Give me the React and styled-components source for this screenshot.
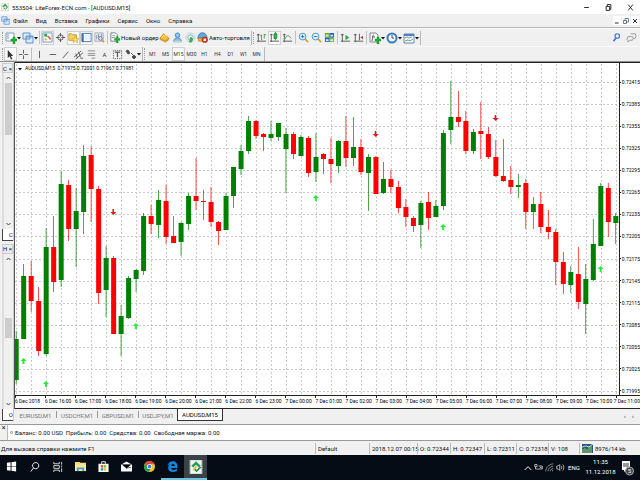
import React from 'react';
import styled, { createGlobalStyle, css } from 'styled-components';

const GlobalStyle = createGlobalStyle`
  * {
    box-sizing: border-box;
  }

  body {
    margin: 0;
    overflow: hidden;
    background: #f0f0f0;
    color: #111;
    font-family: Roboto, 'Liberation Sans', sans-serif;
    font-size: 6px;
    line-height: 9px;
  }

  button {
    margin: 0;
    padding: 0;
    border: 0;
    background: none;
    color: inherit;
    font: inherit;
  }

  svg {
    display: block;
    flex: none;
  }
`;

const Desktop = styled.div`
  display: flex;
  flex-direction: column;
  height: 100vh;
`;

const TitleBar = styled.header`
  display: flex;
  align-items: center;
  gap: 3px;
  height: 14px;
  padding-left: 1px;
  background: #fff;
`;

const Title = styled.h1`
  flex: 1;
  margin: 0;
  font-size: 6px;
  font-weight: 400;
  white-space: nowrap;
`;

const CaptionButton = styled.button`
  display: grid;
  place-items: center;
  width: 19px;
  height: 14px;
`;

const MenuBar = styled.nav`
  display: flex;
  align-items: center;
  height: 14px;
  padding-left: 1px;
  border-bottom: 1px solid #b4b4b4;
`;

const MenuItem = styled.button`
  margin-left: ${props => props.$gap || 8}px;
  white-space: nowrap;
`;

const ChildButton = styled.button`
  display: grid;
  place-items: center;
  width: 8px;
  height: 9px;
  margin-right: 1px;
  background: #fff;
`;

const Spacer = styled.div`
  flex: 1;
`;

const ToolRow = styled.div`
  display: flex;
  align-items: center;
  height: ${props => props.$height}px;
  padding-left: 1px;
  border-top: 1px solid #fafafa;
`;

const ToolGroup = styled.div`
  display: flex;
  align-items: center;
  height: 14px;
  padding: 0 1px;
  border-right: 1px solid #b9b9b9;
`;

const Grip = styled.span`
  width: 2px;
  height: 12px;
  border-left: 1px dotted #999;
`;

const Divider = styled.span`
  width: 1px;
  height: 13px;
  margin: 0 1px;
  background: #c3c3c3;
`;

const pressed = css`
  background: #fafafa;
  box-shadow: inset 0 0 0 1px #cfcfcf;
`;

const ToolButton = styled.button`
  display: flex;
  align-items: center;
  justify-content: center;
  width: ${props => props.$width || 13}px;
  height: 14px;
  color: #333;
  white-space: nowrap;
  ${props => props.$pressed && pressed}
`;

const OrderButton = styled(ToolButton)`
  gap: 1px;
  justify-content: flex-start;
  color: #111;
`;

const Period = styled(ToolButton)`
  font-size: 5px;
`;

const Workspace = styled.main`
  display: flex;
  flex: 1;
  min-height: 0;
  border-top: 1px solid #8c8c8c;
`;

const Docks = styled.aside`
  display: flex;
  flex-direction: column;
  width: 14px;
  gap: 3px;
  padding: 1px 0 3px;
`;

const Dock = styled.section`
  display: flex;
  flex: 1;
  flex-direction: column;
  padding-left: 2px;
  border-right: 1px solid #ccc;
`;

const DockHead = styled.div`
  display: flex;
  align-items: center;
  justify-content: space-between;
  height: 10px;
  border: 1px solid #ccc;
  background: #e8eef6;
`;

const ScrollTrack = styled.div`
  display: flex;
  flex: 1;
  flex-direction: column;
  align-items: center;
  justify-content: space-between;
  padding: 3px 0;
  border-left: 2px solid #ddd;
`;

const ScrollArea = styled.div`
  display: flex;
  flex: 1;
  flex-direction: column;
  width: 7px;
`;

const ScrollThumb = styled.div`
  height: ${props => props.$size}%;
  margin-top: 3px;
  background: #cdcdcd;
`;

const LowerThumb = styled(ScrollThumb)`
  margin-top: auto;
  margin-bottom: 64px;
`;

const DockTab = styled.button`
  height: 12px;
  border-bottom: 1px solid #444;
  border-left: 1px solid #444;
  background: #fff;
  text-align: right;
`;

const ChartColumn = styled.div`
  display: flex;
  flex: 1;
  flex-direction: column;
  min-width: 0;
  margin-left: 1px;
`;

const ChartWindow = styled.section`
  position: relative;
  display: flex;
  flex: 1;
  flex-direction: column;
  min-height: 0;
  border-top: 1px solid #222;
  border-bottom: 1px solid #222;
  background: #fff;
  box-shadow: -1px 0 0 #555;
`;

const PlotRow = styled.div`
  display: flex;
  flex: 1;
  min-height: 0;
`;

const Plot = styled.svg`
  flex: 1;
  width: 0;
  height: 100%;
`;

const ChartCaption = styled.div`
  position: absolute;
  top: 1px;
  left: 3px;
  display: flex;
  align-items: center;
  gap: 3px;
  color: #000;
  font-size: 5px;
  white-space: pre;
`;

const PriceAxis = styled.div`
  display: flex;
  flex-direction: column;
  justify-content: space-between;
  width: 21px;
  padding: 16px 0 1px;
  border-left: 1px solid #222;
  color: #000;
  font-size: 5px;
  line-height: 6px;
`;

const Price = styled.span`
  display: flex;
  align-items: center;
  gap: 1px;

  &::before {
    width: 1px;
    height: 1px;
    background: #222;
    content: '';
  }
`;

const TimeAxis = styled.div`
  display: grid;
  grid-template-columns: repeat(20, minmax(0, 1fr)) 24px;
  height: 13px;
  border-top: 1px solid #222;
  color: #000;
  font-size: 5px;
  line-height: 7px;
`;

const Time = styled.span`
  display: flex;
  flex-direction: column;
  align-items: ${props => (props.$last ? 'flex-end' : 'flex-start')};
  white-space: nowrap;

  &::before {
    align-self: flex-start;
    width: 1px;
    height: 2px;
    background: #222;
    content: '';
  }
`;

const TabStrip = styled.div`
  display: flex;
  height: 15px;
  padding-right: 3px;
`;

const ChartTab = styled.button`
  width: ${props => props.$width}px;
  height: 12px;
  color: #777;
  ${props =>
    props.$active &&
    css`
      border: 1px solid #333;
      border-top: 0;
      background: #fff;
      color: #000;
    `}
`;

const TabSeparator = styled.i`
  width: 1px;
  height: 7px;
  margin-top: 2px;
  background: #999;
`;

const PagerButton = styled.button`
  width: 8px;
  height: 12px;
`;

const Terminal = styled.section`
  display: flex;
  align-items: stretch;
  height: 17px;
  border-top: 1px solid #999;
  border-bottom: 1px solid #999;
`;

const TerminalClose = styled.button`
  align-self: flex-start;
  width: 7px;
  font-size: 7px;
  line-height: 7px;
`;

const Balance = styled.div`
  display: flex;
  flex: 1;
  align-items: center;
  gap: 2px;
  padding-left: 2px;
  border-left: 1px solid #bbb;
  background: #fff;
  white-space: pre;
`;

const Dot = styled.i`
  width: 3px;
  height: 3px;
  border: 1px solid #888;
  border-radius: 50%;
`;

const StatusBar = styled.footer`
  display: grid;
  grid-template-columns: minmax(0, 1fr) 54px 48px 33px 34px 32px 32px 31px 61px;
  align-items: center;
  height: 14px;
`;

const StatusCell = styled.span`
  display: flex;
  align-items: center;
  gap: 2px;
  height: 11px;
  padding-left: ${props => (props.$first ? 0 : 2)}px;
  border-left: 1px solid ${props => (props.$first ? 'transparent' : '#bbb')};
  white-space: nowrap;
`;

const Taskbar = styled.div`
  display: flex;
  height: 25px;
  background: #060c15;
  color: #fff;
`;

const TaskButton = styled.button`
  display: grid;
  place-items: center;
  width: 23px;
  border-bottom: 2px solid ${props => (props.$running ? '#6cc5dc' : 'transparent')};
  background: ${props => (props.$active ? '#3a4148' : 'none')};
`;

const TrayButton = styled.button`
  display: grid;
  place-items: center;
  width: ${props => props.$width || 11}px;
`;

const Clock = styled.time`
  width: 37px;
  padding-top: 2px;
  line-height: 10px;
  text-align: center;
`;

const Notice = styled(TrayButton)`
  margin-right: 4px;
`;

const Icon = ({ size = 12, children, ...rest }) => (
  <svg
    width={size}
    height={size}
    viewBox="0 0 12 12"
    fill="none"
    stroke="#555"
    strokeWidth="1"
    aria-hidden="true"
    {...rest}>
    {children}
  </svg>
);

const Caret = () => (
  <svg width="4" height="4" viewBox="0 0 4 4" aria-hidden="true">
    <path d="M0 1h4L2 3.5z" fill="#111" />
  </svg>
);

const Plus = () => <path d="M6 7h2V5h2v2h2v2h-2v3H8V9H6z" fill="#18b52c" stroke="#0b8519" strokeWidth=".4" />;

const icons = {
  newChart: (
    <>
      <path d="M1 1h8v8H1z" fill="#f8fbff" stroke="#829bb2" />
      <path d="M3 2v5" stroke="#7899bb" />
      <Plus />
    </>
  ),
  windows: (
    <>
      <path d="M1 1h7v6H1zM4 4h7v7H4z" fill="#dceafa" stroke="#5b93d1" />
      <path d="M4 5h7" stroke="#5b93d1" />
    </>
  ),
  market: (
    <>
      <path d="M1 1h10v10H1z" fill="#fff" stroke="#6296c3" />
      <path d="M2.500 2h3v3h-3z" fill="#27a33c" stroke="none" />
      <path d="M5 4l4 5 1-2-3-3z" fill="#e0622f" stroke="none" />
      <path d="M3 6l3 3H3z" fill="#e8a23c" stroke="none" />
    </>
  ),
  crosshair: (
    <>
      <circle cx="6" cy="6" r="3" />
      <path d="M6 1v4M6 7v4M1 6h4M7 6h4" />
    </>
  ),
  navigator: (
    <>
      <path d="M1 2h3l1 1h4v6H1z" fill="#f8d76b" stroke="#bc9330" />
      <path d="M8 4l1 3 3 .2-2 2 .5 2.6L8 10l-2.5 1.5.5-2.7-2-1.8 3-.2z" fill="#ffdc66" stroke="#c89624" strokeWidth=".6" />
    </>
  ),
  terminal: (
    <>
      <path d="M1 1.500h10v9H1z" fill="#fff" stroke="#3e6fae" />
      <path d="M2 2v9" stroke="#3e6fae" strokeWidth="2" />
      <path d="M4 3h6v6H4z" fill="#e7eff9" stroke="none" />
    </>
  ),
  tester: (
    <>
      <path d="M1 1h9v9H1z" fill="#edf2f7" stroke="#9bacbe" />
      <path d="M3 3v5M5 2v4M8 2v3" stroke="#718ca8" />
      <circle cx="7" cy="7" r="2" fill="#d8eefc" stroke="#668" />
      <path d="M8.500 8.500L11 11" stroke="#d6a62f" strokeWidth="2" />
    </>
  ),
  order: (
    <>
      <path d="M2 1h5l2 2v7H2z" fill="#fff" stroke="#6d7c89" />
      <path d="M3 4h4M3 6h4" stroke="#8d9da9" />
      <Plus />
    </>
  ),
  meta: (
    <>
      <path d="M1 7l4-5 6 5-4 3z" fill="#f6be38" stroke="#c68316" />
      <path d="M1 8l6 3 4-3" stroke="#d68c19" />
      <path d="M3 6l3-3 2 2" stroke="#fff0a0" />
    </>
  ),
  account: (
    <>
      <circle cx="6" cy="3.500" r="2.500" fill="#8bc7ef" stroke="#4688ba" />
      <path d="M2 10c0-5 8-5 8 0z" fill="#86c4ee" stroke="#4a83b5" />
      <path d="M2 9h8v2H2z" fill="#dceaf6" stroke="#7195b8" strokeWidth=".5" />
    </>
  ),
  signals: (
    <>
      <circle cx="6" cy="6" r="5" stroke="#b4d3dc" />
      <circle cx="6" cy="6" r="3" stroke="#79b7c0" />
      <path d="M6 6c2 0 3 2 1 5H5z" fill="#33ae55" stroke="#33ae55" />
    </>
  ),
  auto: (
    <>
      <path d="M1 7c0-8 9-8 10-1z" fill="#5ea9de" stroke="#3a79ad" />
      <path d="M1 7h8v3H2z" fill="#f4c34f" stroke="#c38b26" />
      <circle cx="8.500" cy="8.500" r="3" fill="#e03d23" stroke="#b92b18" />
      <path d="M7.200 7.200h2.600v2.600H7.200z" fill="#fff" stroke="none" />
    </>
  ),
  bars: (
    <>
      <path d="M2.500 2v9M1 10h10M1 3h3" />
      <path d="M6 3v6M6 4H4.500M9 2v5M9 3h2" stroke="#35a055" />
    </>
  ),
  candles: (
    <>
      <path d="M2.500 2v9M1 10h10M1 3h3" />
      <path d="M7 0v9" stroke="#238a39" />
      <path d="M5.500 2h3v5h-3z" fill="#21c24b" stroke="#218639" />
    </>
  ),
  line: (
    <>
      <path d="M2.500 2v9M1 10h10M1 3h3" />
      <path d="M3 8c2-5 4-5 7-1" stroke="#35a055" />
    </>
  ),
  zoomIn: (
    <>
      <path d="M7.500 7.500L11 11" stroke="#d1a536" strokeWidth="2" />
      <circle cx="5" cy="5" r="3.700" fill="#def2ff" stroke="#458fca" />
      <path d="M3 5h4M5 3v4" stroke="#2776b8" />
    </>
  ),
  zoomOut: (
    <>
      <path d="M7.500 7.500L11 11" stroke="#d1a536" strokeWidth="2" />
      <circle cx="5" cy="5" r="3.700" fill="#def2ff" stroke="#458fca" />
      <path d="M3 5h4" stroke="#2776b8" />
    </>
  ),
  tile: (
    <>
      <path d="M1 1h5v5H1zM6 6h5v5H6z" fill="#6fb52a" stroke="none" />
      <path d="M6 1h5v5H6zM1 6h5v5H1z" fill="#2862b0" stroke="none" />
      <path d="M2 3h3v2H2zM7 3h3v2H7zM2 8h3v2H2zM7 8h3v2H7z" fill="#dcebf2" stroke="none" />
    </>
  ),
  scroll: (
    <>
      <path d="M2.500 2v9M1 10h10M1 3h3" />
      <path d="M6 3l4 3-4 3z" fill="#27a84a" stroke="none" />
    </>
  ),
  shift: (
    <>
      <path d="M2.500 2v9M1 10h10M1 3h3M7 2v7" />
      <path d="M11 4L8 6l3 2z" fill="#a04848" stroke="none" />
    </>
  ),
  indicators: (
    <>
      <path d="M1 1h6l2 2v7H1z" fill="#fff" stroke="#7c8791" />
      <path d="M5 3c-2 0-1 3-2 6M3 5h3" />
      <Plus />
    </>
  ),
  clock: (
    <>
      <circle cx="6" cy="6" r="4.500" fill="#fff" stroke="#367cc3" strokeWidth="2" />
      <path d="M6 3v3h2" stroke="#345" />
    </>
  ),
  template: (
    <>
      <path d="M1 2h10v9H1z" fill="#fff" stroke="#5d89b3" />
      <path d="M1 3h10" stroke="#4e82b9" strokeWidth="2" />
      <path d="M2 6l2-1 2 1 3-1M2 9l3-1 2 1 3-2" stroke="#719a86" />
    </>
  ),
  cursor: <path d="M3 1v9l2-2 1.500 3.500L8 11 6.500 7.500H9z" fill="#333" stroke="none" />,
  cross: <path d="M6 1v4M6 7v4M1 6h4M7 6h4" />,
  vertical: <path d="M6 2v8" />,
  horizontal: <path d="M3 6h7" />,
  trend: <path d="M3 10L9 3" />,
  channel: <path d="M1 9l8-7M3 11l8-7M3 5l2 5M6 3l2 6M8 10h3" />,
  fibo: <path d="M2 2h8M2 5h8M2 7h8M6 10h4" stroke="#888" />,
  label: (
    <>
      <path d="M1.500 1.500h9v9h-9z" strokeDasharray="1 1" />
      <path d="M3 3.500h6M6 3v6" strokeWidth="1.300" />
    </>
  ),
  shapes: <path d="M1 3l2-1 2 3-2 1zM6 5l2 2M7 9l2-2 2 2-2 2z" fill="#444" />,
};

const standard = [
  { icon: 'market', label: 'Обзор рынка', on: true },
  { icon: 'crosshair', label: 'Окно данных' },
  { icon: 'navigator', label: 'Навигатор', on: true },
  { icon: 'terminal', label: 'Терминал', on: true },
  { icon: 'tester', label: 'Тестер' },
];

const services = [
  { icon: 'meta', label: 'MetaEditor' },
  { icon: 'account', label: 'Сообщество' },
  { icon: 'signals', label: 'Сигналы' },
];

const chartTools = [
  { icon: 'bars', label: 'Бары' },
  { icon: 'candles', label: 'Свечи', on: true },
  { icon: 'line', label: 'Линия' },
  null,
  { icon: 'zoomIn', label: 'Приблизить' },
  { icon: 'zoomOut', label: 'Отдалить' },
  { icon: 'tile', label: 'Окна мозаикой' },
  null,
  { icon: 'scroll', label: 'Автопрокрутка' },
  { icon: 'shift', label: 'Сдвиг графика' },
  null,
  { icon: 'indicators', label: 'Индикаторы', menu: true },
  { icon: 'clock', label: 'Периоды', menu: true },
  { icon: 'template', label: 'Шаблоны', menu: true },
];

const drawTools = [
  { icon: 'cursor', label: 'Курсор', on: true },
  { icon: 'cross', label: 'Перекрестие' },
  null,
  { icon: 'vertical', label: 'Вертикальная линия' },
  { icon: 'horizontal', label: 'Горизонтальная линия' },
  { icon: 'trend', label: 'Трендовая линия' },
  { icon: 'channel', label: 'Канал' },
  { icon: 'fibo', label: 'Фибоначчи' },
  { text: 'A', label: 'Текст' },
  { icon: 'label', label: 'Метка' },
  { icon: 'shapes', label: 'Стрелки', menu: true },
];

const menus = ['Файл', 'Вид', 'Вставка', 'Графики', 'Сервис', 'Окно', 'Справка'];
const periods = ['M1', 'M5', 'M15', 'M30', 'H1', 'H4', 'D1', 'W1', 'MN'];

const prices = Array.from({ length: 15 }, (_, i) => `0.${72415 - i * 30}`);
const times = Array.from({ length: 21 }, (_, i) => {
  if (i === 0) {
    return '6 Dec 2018';
  }
  const hour = (15 + i) % 24;
  return `${i < 9 ? 6 : 7} Dec ${String(hour).padStart(2, '0')}:00`;
});

// colour, high, body top, body bottom, low
const candles = [
  ['g', 331, 339, 380, 384], ['g', 264, 276, 339, 339], ['r', 261, 276, 301, 312],
  ['r', 287, 301, 351, 356], ['g', 228, 247, 354, 356], ['r', 216, 247, 282, 292],
  ['g', 171, 184, 280, 287], ['r', 180, 185, 229, 241], ['g', 188, 211, 229, 267],
  ['g', 145, 156, 212, 234], ['r', 146, 155, 189, 222], ['r', 186, 189, 293, 304],
  ['g', 246, 258, 290, 317], ['r', 256, 258, 334, 334], ['g', 305, 316, 334, 356],
  ['g', 276, 278, 318, 319], ['g', 269, 270, 279, 292], ['g', 213, 216, 271, 275],
  ['r', 205, 216, 224, 234], ['g', 190, 200, 225, 238], ['r', 185, 201, 237, 244],
  ['r', 216, 236, 243, 243], ['g', 222, 223, 242, 256], ['g', 193, 196, 224, 230],
  ['r', 158, 196, 201, 210], ['r', 190, 201, 202, 220], ['r', 187, 202, 222, 227],
  ['r', 221, 222, 231, 245], ['g', 193, 196, 230, 230], ['g', 167, 167, 196, 208],
  ['g', 145, 151, 169, 175], ['g', 116, 121, 151, 154], ['r', 120, 121, 136, 139],
  ['r', 133, 134, 137, 151], ['g', 121, 134, 138, 141], ['g', 123, 123, 137, 141],
  ['g', 128, 134, 149, 193], ['r', 132, 134, 154, 159], ['g', 135, 137, 156, 156],
  ['r', 136, 138, 173, 177], ['g', 133, 157, 172, 182], ['r', 153, 154, 159, 174],
  ['r', 138, 159, 164, 183], ['g', 140, 141, 166, 173], ['r', 116, 141, 158, 167],
  ['g', 117, 147, 158, 166], ['r', 139, 147, 172, 175], ['g', 154, 157, 173, 211],
  ['r', 156, 157, 194, 194], ['g', 162, 179, 193, 194], ['r', 170, 179, 187, 193],
  ['r', 181, 187, 208, 213], ['r', 199, 207, 217, 227], ['r', 216, 218, 226, 232],
  ['g', 201, 203, 225, 248], ['r', 192, 202, 218, 230], ['g', 200, 206, 217, 217],
  ['g', 130, 133, 206, 210], ['g', 81, 117, 130, 144], ['r', 91, 117, 122, 127],
  ['r', 111, 121, 151, 154], ['g', 129, 132, 151, 154], ['r', 102, 131, 134, 159],
  ['r', 127, 134, 157, 159], ['r', 140, 157, 176, 177], ['r', 139, 176, 181, 182],
  ['r', 166, 180, 187, 194], ['g', 174, 185, 187, 198], ['r', 179, 183, 212, 229],
  ['g', 197, 204, 212, 229], ['r', 192, 204, 227, 233], ['r', 210, 227, 232, 239],
  ['r', 229, 232, 262, 285], ['r', 252, 262, 284, 294], ['g', 266, 272, 285, 293],
  ['r', 247, 274, 302, 309], ['g', 264, 279, 304, 334], ['g', 219, 244, 280, 281],
  ['g', 183, 186, 246, 246], ['r', 183, 188, 222, 237], ['g', 213, 216, 223, 244],
];

// candle index, centre
const buys = [[1, 361], [4, 384], [16, 326], [40, 198], [57, 227], [78, 269]];
const sells = [[13, 212], [48, 134], [64, 118]];

const STEP = 7.495;
const candleX = i => 1 + i * STEP;

const CandlePlot = () => (
  <Plot viewBox="0 63 604 332" preserveAspectRatio="none" role="img" aria-label="AUDUSD,M15">
    <g stroke="#cacaca" strokeDasharray="2 2" shapeRendering="crispEdges">
      {prices.map((price, i) => (
        <path key={price} d={`M0 ${Math.round(82 + i * 22.07)}.5h604`} />
      ))}
      {times.concat(times.slice(1)).map((_, i) => (
        <path key={i} d={`M${Math.round(candleX(i * 2))}.5 64v331`} />
      ))}
    </g>
    {candles.map(([tone, high, top, bottom, low], i) => {
      const color = tone === 'g' ? '#008000' : '#ff0000';
      const x = candleX(i);
      return (
        <g key={i} fill={color}>
          <rect x={x - 0.2} y={high} width="0.7" height={low - high} />
          <rect x={x - 2.3} y={top} width="5" height={Math.max(1, bottom - top)} />
        </g>
      );
    })}
    {buys.map(([i, y]) => (
      <path key={i} d={`M${candleX(i)} ${y - 3}l3 3h-2v3h-2v-3h-2z`} fill="#22ee33" />
    ))}
    {sells.map(([i, y]) => (
      <path key={i} d={`M${candleX(i)} ${y + 3}l-3-3h2v-3h1.500v3h2.500z`} fill="#e01818" />
    ))}
  </Plot>
);

const Tool = ({ item }) => {
  if (!item) {
    return <Divider />;
  }
  return (
    <ToolButton aria-label={item.label} $pressed={item.on} $width={item.menu ? 17 : 13}>
      {item.text || <Icon size={item.menu ? 12 : 11}>{icons[item.icon]}</Icon>}
      {item.menu && <Caret />}
    </ToolButton>
  );
};

const Chevron = ({ up }) => (
  <svg width="5" height="4" viewBox="0 0 5 4" fill="none" stroke="#444" aria-hidden="true">
    <path d={up ? 'M.5 3l2-2 2 2' : 'M.5 1l2 2 2-2'} />
  </svg>
);

const LiteForexIcon = ({ size }) => (
  <Icon size={size}>
    <path d="M1 0h10v12H1z" fill="#f4f8f2" stroke="#b8c9b5" />
    <path d="M2 5l4-4 4 4-1.500 1.500L6 4 3.500 6.500z" fill="#239d58" stroke="none" />
    <path d="M3 8l3-3 1 1-3 3z" fill="#e9b938" stroke="none" />
    <path d="M5 8l1.500 1.500L10 6" stroke="#238b58" strokeWidth="1.500" />
  </Icon>
);

const taskIcons = [
  {
    label: 'Пуск',
    art: <path d="M1 2l4-.6v4.200H1zM6 1.300l5-.8v5.100H6zM1 6.400h4v4.200L1 10zM6 6.400h5v5.100l-5-.8z" fill="#fff" stroke="none" />,
  },
  {
    label: 'Поиск',
    art: <path d="M4.700 7.300a3.400 3.400 0 1 1 1 .8zM5 7.500L2 11.500" stroke="#fff" />,
  },
  {
    label: 'Представление задач',
    art: <path d="M2 1v2h6V1M2 5h6v3H2zM2 12v-2h6v2M10.500 1v3M10.500 5v2M10.500 8v4" stroke="#ddd" />,
  },
  {
    label: 'Проводник',
    art: (
      <>
        <path d="M0 1h5l1 1h6v9H0z" fill="#ffda70" stroke="none" />
        <path d="M0 4h12v7H0z" fill="#ffe89b" stroke="none" />
        <path d="M2 7h8v4H8V9H4v2H2z" fill="#3b9cd8" stroke="none" />
      </>
    ),
  },
  {
    label: 'Магазин',
    art: (
      <>
        <path d="M4 3V.8h4V3" stroke="#fff" />
        <path d="M.500 3h11v9H.500z" fill="#fff" stroke="none" />
        <path d="M3 4.500h2.700v2.700H3z" fill="#ed5132" stroke="none" />
        <path d="M6.300 4.500H9v2.700H6.300z" fill="#7eb93b" stroke="none" />
        <path d="M3 7.800h2.700v2.700H3z" fill="#1e98d6" stroke="none" />
        <path d="M6.300 7.800H9v2.700H6.300z" fill="#f7b822" stroke="none" />
      </>
    ),
  },
  {
    label: 'Почта',
    art: (
      <>
        <path d="M0 4l6-3.500L12 4v7.500H0z" fill="#fff" stroke="none" />
        <path d="M1.500 4h9L6 7.800zM6 7.800l5-1" fill="#060c15" stroke="#060c15" strokeWidth=".7" />
      </>
    ),
  },
  {
    label: 'Chrome',
    art: (
      <g stroke="none">
        <circle cx="6" cy="6" r="6" fill="#f3c623" />
        <path d="M1 2.700A6 6 0 0 1 11.500 3.500H6L4 8z" fill="#df4938" />
        <path d="M1 2.700L4 7.500l3 1L5.500 12A6 6 0 0 1 1 2.700z" fill="#279b54" />
        <circle cx="6" cy="6" r="2.800" fill="#fff" />
        <circle cx="6" cy="6" r="2.100" fill="#4388e8" />
      </g>
    ),
  },
  {
    label: 'Edge',
    running: true,
    art: (
      <path
        d="M.5 5.500C1.500-1.500 11.500-1.500 11.500 6v1.500h-7c.5 2.500 4 2.500 6.300 1v2.300C6.500 13 1.300 12 1.300 7.500 1.300 5 3 3.500 4.700 3 2.800 3 1.500 4.200.5 5.500zM4.600 5.500h3.900c0-3-3.400-3-3.900 0z"
        fill="#1685df"
        stroke="none"
      />
    ),
  },
];

const tabs = [
  { name: 'EURUSD,M1', width: 41 },
  { name: 'USDCHF,M1', width: 40 },
  { name: 'GBPUSD,M1', width: 40 },
  { name: 'USDJPY,M1', width: 38 },
  { name: 'AUDUSD,M15', width: 46, active: true },
];

const App = () => (
  <Desktop>
    <GlobalStyle />
    <TitleBar>
      <LiteForexIcon size={8} />
      <Title>553504: LiteForex-ECN.com - [AUDUSD,M15]</Title>
      <CaptionButton aria-label="Свернуть">
        <Icon size={7} stroke="#111" strokeWidth="1.500"><path d="M2 6h8" /></Icon>
      </CaptionButton>
      <CaptionButton aria-label="Восстановить">
        <Icon size={7} stroke="#111" strokeWidth="1.500"><path d="M2 4h6v7H2zM4 4V1h6v8H8" /></Icon>
      </CaptionButton>
      <CaptionButton aria-label="Закрыть">
        <Icon size={7} stroke="#111" strokeWidth="1.500"><path d="M2 1l8 10M10 1L2 11" /></Icon>
      </CaptionButton>
    </TitleBar>

    <MenuBar>
      <Icon size={9}>{icons.windows}</Icon>
      {menus.map((menu, i) => (
        <MenuItem key={menu} $gap={i === 0 ? 3 : 8}>{menu}</MenuItem>
      ))}
      <Spacer />
      <ChildButton aria-label="Свернуть график">
        <Icon size={6} stroke="#223" strokeWidth="2"><path d="M2 10h7" /></Icon>
      </ChildButton>
      <ChildButton aria-label="Восстановить график">
        <Icon size={6} stroke="#456" strokeWidth="1.500"><path d="M1 5h6v6H1zM4 5V1h7v7H7" /></Icon>
      </ChildButton>
      <ChildButton aria-label="Закрыть график">
        <Icon size={6} stroke="#234" strokeWidth="2"><path d="M2 2l8 8M10 2l-8 8" /></Icon>
      </ChildButton>
    </MenuBar>

    <ToolRow $height={18}>
      <ToolGroup>
        <Grip />
        <Tool item={{ icon: 'newChart', label: 'Новый график', menu: true }} />
        <Tool item={{ icon: 'windows', label: 'Профили', menu: true }} />
        <Divider />
        {standard.map(item => <Tool key={item.icon} item={item} />)}
        <Divider />
        <OrderButton $width={49}>
          <Icon size={11}>{icons.order}</Icon>
          Новый ордер
        </OrderButton>
        {services.map(item => <Tool key={item.icon} item={item} />)}
        <OrderButton $width={53}>
          <Icon size={11}>{icons.auto}</Icon>
          Авто-торговля
        </OrderButton>
      </ToolGroup>
      <ToolGroup>
        <Grip />
        {chartTools.map((item, i) => <Tool key={i} item={item} />)}
      </ToolGroup>
      <Spacer />
      <ToolButton aria-label="Поиск">
        <Icon size={9} stroke="#3f6fd0" strokeWidth="1.500">
          <circle cx="7" cy="4" r="3" />
          <path d="M5 7l-3 4" strokeWidth="2" />
        </Icon>
      </ToolButton>
      <ToolButton aria-label="Чат" $width={17}>
        <Icon size={11} stroke="#999">
          <path d="M5 2h5l1 2-1 3H8M2 5h5l1 2-1 2H4l-2 2V9L1 8z" fill="#eee" />
        </Icon>
      </ToolButton>
    </ToolRow>

    <ToolRow $height={15}>
      <ToolGroup>
        <Grip />
        {drawTools.map((item, i) => <Tool key={i} item={item} />)}
      </ToolGroup>
      <ToolGroup>
        <Grip />
        {periods.map(period => (
          <Period key={period} $pressed={period === 'M15'}>{period}</Period>
        ))}
      </ToolGroup>
    </ToolRow>

    <Workspace>
      <Docks>
        <Dock>
          <DockHead>С<button aria-label="Закрыть обзор">×</button></DockHead>
          <ScrollTrack>
            <Chevron up />
            <ScrollArea><ScrollThumb $size={37} /></ScrollArea>
            <Chevron />
          </ScrollTrack>
          <DockTab>С</DockTab>
        </Dock>
        <Dock>
          <DockHead>Н<button aria-label="Закрыть навигатор">×</button></DockHead>
          <ScrollTrack>
            <Chevron up />
            <ScrollArea><LowerThumb $size={14} /></ScrollArea>
            <Chevron />
          </ScrollTrack>
          <DockTab>О</DockTab>
        </Dock>
      </Docks>
      <ChartColumn>
        <ChartWindow>
          <PlotRow>
            <CandlePlot />
            <PriceAxis>
              {prices.map(price => <Price key={price}>{price}</Price>)}
            </PriceAxis>
          </PlotRow>
          <TimeAxis>
            {times.map((time, i) => (
              <Time key={time} $last={i === times.length - 1}>{time}</Time>
            ))}
          </TimeAxis>
          <ChartCaption>
            <Caret />
            {'AUDUSD,M15  0.71975 0.72001 0.71967 0.71981'}
          </ChartCaption>
        </ChartWindow>
        <TabStrip>
          {tabs.map((tab, i) => (
            <React.Fragment key={tab.name}>
              <ChartTab $width={tab.width} $active={tab.active}>{tab.name}</ChartTab>
              {i < 3 && <TabSeparator />}
            </React.Fragment>
          ))}
          <Spacer />
          <PagerButton aria-label="Назад">‹</PagerButton>
          <PagerButton aria-label="Вперёд">›</PagerButton>
        </TabStrip>
      </ChartColumn>
    </Workspace>

    <Terminal>
      <TerminalClose aria-label="Закрыть терминал">×</TerminalClose>
      <Balance>
        <Dot />
        {'Баланс: 0.00 USD  Прибыль: 0.00  Средства: 0.00  Свободная маржа: 0.00'}
      </Balance>
    </Terminal>

    <StatusBar>
      <StatusCell $first>Для вызова справки нажмите F1</StatusCell>
      <StatusCell>Default</StatusCell>
      <StatusCell>2018.12.07 00:15</StatusCell>
      <StatusCell>O: 0.72344</StatusCell>
      <StatusCell>H: 0.72347</StatusCell>
      <StatusCell>L: 0.72311</StatusCell>
      <StatusCell>C: 0.72318</StatusCell>
      <StatusCell>V: 108</StatusCell>
      <StatusCell>
        <svg width="11" height="9" viewBox="0 0 11 9" aria-hidden="true">
          <path d="M0 0h11v9H0z" fill="#22568b" />
          <path d="M1 9V5M3 9V4M5 9V5M7 9V3M9 9V2" stroke="#9bd14b" />
          <path d="M0 3l4-1 3 1 4-3" stroke="#d8e8a0" fill="none" />
        </svg>
        8976/14 kb
      </StatusCell>
    </StatusBar>

    <Taskbar>
      {taskIcons.map(task => (
        <TaskButton key={task.label} aria-label={task.label} $running={task.running}>
          <Icon size={11}>{task.art}</Icon>
        </TaskButton>
      ))}
      <TaskButton aria-label="LiteForex" $running $active>
        <LiteForexIcon size={14} />
      </TaskButton>
      <Spacer />
      <TrayButton aria-label="Скрытые значки">
        <Icon size={8} stroke="#eee" strokeWidth="1.500"><path d="M1 9l5-5 5 5" /></Icon>
      </TrayButton>
      <TrayButton aria-label="Батарея">
        <Icon size={9} stroke="#ddd"><path d="M1 2h3v3H1zM2 5v3h9V4H6M8 5l2 2M10 5L8 7" /></Icon>
      </TrayButton>
      <TrayButton aria-label="Сеть">
        <Icon size={9} stroke="#aaa"><path d="M1 11C1 6 5 2 11 1M4 11c0-4 3-6 7-7M7 11c0-2 2-4 4-4M10 11V9" /></Icon>
      </TrayButton>
      <TrayButton aria-label="Громкость">
        <Icon size={9} stroke="#ddd"><path d="M1 4h2l2-2v8L3 8H1zM7 4c1 1 1 3 0 4M9 2c2 2 2 6 0 8" /></Icon>
      </TrayButton>
      <TrayButton $width={16}>ENG</TrayButton>
      <Clock>11:35<br />11.12.2018</Clock>
      <Notice aria-label="Уведомления" $width={17}>
        <svg width="13" height="16" viewBox="0 0 13 16" aria-hidden="true">
          <path d="M1 1h8v9H5l-2 2v-2H1z" fill="#fff" />
          <path d="M2 4h6M2 6h6" stroke="#333" />
          <circle cx="8.500" cy="11" r="4" fill="#444" stroke="#aaa" />
          <text x="8.500" y="13" fill="#fff" fontSize="6" textAnchor="middle">5</text>
        </svg>
      </Notice>
    </Taskbar>
  </Desktop>
);

export default App;
